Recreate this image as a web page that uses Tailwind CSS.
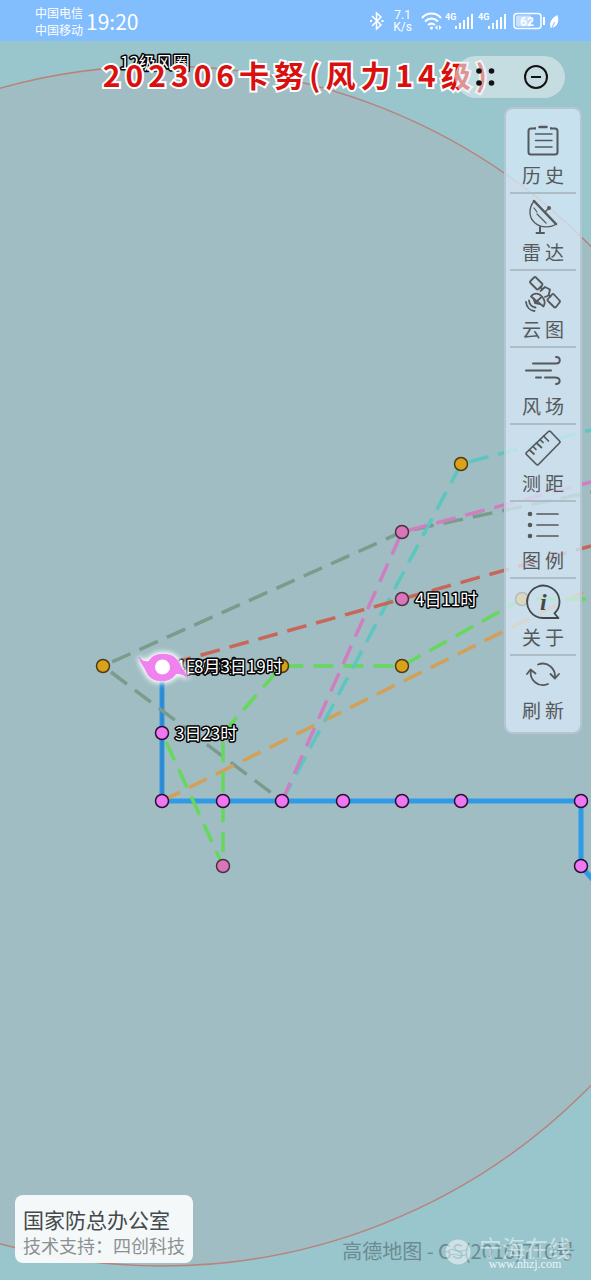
<!DOCTYPE html>
<html lang="zh-CN">
<head>
    <meta charset="UTF-8">
    <meta name="viewport" content="width=device-width, initial-scale=1.0">
    <title>台风路径</title>
    <script src="https://cdn.jsdelivr.net/npm/@tailwindcss/browser@4"></script>
</head>
<body class="relative min-h-screen flex flex-col overflow-hidden bg-[#99c5cd] font-['Noto_Sans_CJK_SC',sans-serif]">

    <!-- Map -->
    <svg class="absolute inset-0 w-full h-full" fill="none">
        <circle cx="162" cy="666" r="600" fill="#9fbdc3" stroke="#b9827c" stroke-width="1.500"/>

        <!-- Actual track -->
        <path d="M162 666V801H581V866L593 880" stroke="#2f9be6" stroke-width="5"/>
        <path d="M162 666V801" stroke="#2f88cf" stroke-width="3"/>

        <!-- Forecast tracks -->
        <g stroke-width="3.500" stroke-dasharray="20 10">
            <path d="M103 666L282 801" stroke="#7a9c8c" stroke-dashoffset="20"/>
            <path d="M103 666L402 532L591 492" stroke="#7a9c8c" stroke-dashoffset="20"/>
            <path d="M162 801L591 588" stroke="#d3a058"/>
            <path d="M162 733L223 866V733L282 666H402L522 599H591" stroke="#66d85c" stroke-dashoffset="20"/>
            <path d="M282 801L461 464L591 430" stroke="#5cc6c0"/>
            <path d="M282 801L402 532L591 482" stroke="#cf7fc0"/>
            <path d="M162 666L402 599L591 546" stroke="#c9665a" stroke-dashoffset="20"/>
        </g>

        <!-- Track points -->
        <g stroke="#2b1030" stroke-width="1.5" fill="#ee78f2">
            <circle cx="162" cy="733" r="6.5"/>
            <circle cx="162" cy="801" r="6.5"/>
            <circle cx="223" cy="801" r="6.5"/>
            <circle cx="282" cy="801" r="6.5"/>
            <circle cx="343" cy="801" r="6.5"/>
            <circle cx="402" cy="801" r="6.5"/>
            <circle cx="461" cy="801" r="6.5"/>
            <circle cx="581" cy="801" r="6.5"/>
            <circle cx="581" cy="866" r="6.5"/>
        </g>
        <g stroke="#4a3340" stroke-width="1.5" fill="#d975b8">
            <circle cx="223" cy="866" r="6.5"/>
            <circle cx="402" cy="532" r="6.5"/>
            <circle cx="402" cy="599" r="6.5"/>
        </g>
        <g stroke="#4d3c16" stroke-width="1.5" fill="#dca11a">
            <circle cx="103" cy="666" r="6.5"/>
            <circle cx="282" cy="666" r="6.5"/>
            <circle cx="402" cy="666" r="6.5"/>
            <circle cx="461" cy="464" r="6.5"/>
            <circle cx="522" cy="599" r="6.5"/>
        </g>

        <g class="text-[17px] [paint-order:stroke]" fill="#fff" stroke="#000" stroke-width="3" stroke-linejoin="round">
            <text x="120" y="69">12级风圈</text>
            <text x="175" y="673">4日05时</text>
            <text x="175" y="740">3日23时</text>
            <text x="415" y="606">4日11时</text>
        </g>

        <!-- Typhoon centre -->
        <g class="[filter:drop-shadow(0_0_3px_#fff)_drop-shadow(0_0_2px_#fff)]">
            <path d="M139 657C141 661 145 662.500 149 661.500C151 657 156 654.300 163 654.300C173 654.300 177 659 179 663C181 668 184 671 188 678C184 674.500 180 673 176 673.500C173 678.500 168 680.700 161.700 680.700C153 680.700 149 677 147 672.500C144.500 667 142 665 139 657Z" fill="#ef82ee" stroke="#ef82ee" stroke-linejoin="round"/>
            <circle cx="162.500" cy="667" r="7.500" fill="#fff"/>
        </g>
        <text x="194" y="673" class="text-[17px] [paint-order:stroke]" fill="#fff" stroke="#000" stroke-width="3" stroke-linejoin="round">8月3日19时</text>
    </svg>

    <!-- Status bar -->
    <header class="relative h-[41px] pl-[35px] pr-8 flex items-center justify-between bg-[#82bdfe] text-white">
        <div class="flex items-center gap-[3px]">
            <div class="text-[12px] leading-[17px]">
                <p>中国电信</p>
                <p>中国移动</p>
            </div>
            <time class="text-[21px] leading-6">19:20</time>
        </div>
        <div class="flex items-center">
            <svg class="w-4 h-5" viewBox="0 0 16 20" fill="none" stroke="#fff" stroke-width="1.5">
                <path d="M3 5L12 14L7.500 18V2L12 6L3 15"/>
                <path d="M1 10H3M12.500 10H14.500" stroke-width="2"/>
            </svg>
            <div class="mx-2 text-[12px] leading-[12px] text-center font-[Roboto,sans-serif]">
                <p>7.1</p>
                <p>K/s</p>
            </div>
            <svg class="w-6 h-5" viewBox="0 0 24 20" fill="none" stroke="#fff" stroke-width="2">
                <path d="M2 7C7 1 16 1 21 7M5 10.500C9 6.500 14 6.500 18 10.500M8 14C10.500 12 12.500 12 15 14"/>
                <circle cx="11.500" cy="17" r="1.500" fill="#fff" stroke="none"/>
                <path d="M17.500 14L15 16.500L17.500 19ZM19 14L21.500 16.500L19 19Z" fill="#fff" stroke="none"/>
            </svg>
            <svg class="w-[33px] h-5" viewBox="0 0 33 20" fill="#fff">
                <text x="1" y="9" class="text-[9px] font-bold font-[Roboto,sans-serif]">4G</text>
                <path d="M11 15h2v3h-2zM15 12h2v6h-2zM19 9h2v9h-2zM23 6h2v12h-2zM27 3h2v15h-2z"/>
            </svg>
            <svg class="mr-[3px] w-[33px] h-5" viewBox="0 0 33 20" fill="#fff">
                <text x="1" y="9" class="text-[9px] font-bold font-[Roboto,sans-serif]">4G</text>
                <path d="M11 15h2v3h-2zM15 12h2v6h-2zM19 9h2v9h-2zM23 6h2v12h-2zM27 3h2v15h-2z"/>
            </svg>
            <svg class="w-[46px] h-5" viewBox="0 0 46 20" fill="none">
                <rect x="1" y="2.500" width="27" height="15" rx="3" stroke="#fff" stroke-width="1.500"/>
                <rect x="3" y="4.500" width="15" height="11" rx="1" fill="#fff" fill-opacity=".55"/>
                <text x="7" y="14.500" class="text-[12px] font-bold font-[Roboto,sans-serif]" fill="#fff">62</text>
                <path d="M31 6V14" stroke="#fff" stroke-width="2"/>
                <path d="M44.500 4C46 9 45.500 15 40 16.500L38 17.500C35.500 12 38.500 7 44.500 4Z" fill="#fff"/>
                <path d="M38.500 18L41.500 11" stroke="#82bdfe"/>
            </svg>
        </div>
    </header>

    <main class="relative flex-1 flex flex-col">
        <div class="grid items-center pt-[15px] mb-[9px]">
            <h1 class="[grid-area:1/1] pl-1 mb-1.5 text-center text-[30px] leading-9 font-bold tracking-[5px] text-[#d9100e] [-webkit-text-stroke:4px_#fff] [paint-order:stroke]">202306卡努(风力14级)</h1>
            <div class="[grid-area:1/1] justify-self-end relative mr-[26px] w-[110px] h-[42px] rounded-full bg-[#e2edee]/60 flex items-center justify-between pl-[21px] pr-[17px]">
                <button aria-label="更多">
                    <svg class="w-5 h-6" viewBox="0 0 20 24" fill="#111">
                        <circle cx="3" cy="6" r="2.800"/>
                        <circle cx="15.500" cy="6" r="2.800"/>
                        <circle cx="3" cy="18" r="2.800"/>
                        <circle cx="15.500" cy="18" r="2.800"/>
                    </svg>
                </button>
                <button aria-label="关闭">
                    <svg class="w-6 h-6" viewBox="0 0 24 24" fill="none" stroke="#111" stroke-width="2">
                        <circle cx="12" cy="12" r="11"/>
                        <path d="M7 12H17"/>
                    </svg>
                </button>
            </div>
        </div>

        <!-- Tool panel -->
        <nav class="self-end mr-[9px] w-[78px] px-1 pt-2 pb-2 flex flex-col rounded-lg border-2 border-[#b4c6d0] bg-[#d8e9f8]/75 bg-clip-padding text-[19px] leading-7 tracking-[4px] text-[#55595c]">
            <button class="flex flex-col items-center gap-[3px] pt-[5px] pb-[3px] border-b-2 border-[#aebcc6]">
                <svg class="w-9 h-9" viewBox="0 0 36 36" fill="none" stroke="#55595c" stroke-width="2" stroke-linecap="round">
                    <path d="M10 6V6.500H6Q3.500 6.500 3.500 9V30Q3.500 32.500 6 32.500H30Q32.500 32.500 32.500 30V9Q32.500 6.500 30 6.500H26V6"/>
                    <path d="M14.500 5H21.500" stroke-width="2.500"/>
                    <path d="M10.500 12H27M10.500 18.500H27M10.500 25H27" stroke-width="1.500"/>
                </svg>
                <span class="pl-1">历史</span>
            </button>
            <button class="flex flex-col items-center gap-[3px] pt-[5px] pb-[3px] border-b-2 border-[#aebcc6]">
                <svg class="w-9 h-9" viewBox="0 0 36 36" fill="none" stroke="#55595c" stroke-width="1.500" stroke-linecap="round">
                    <path d="M9 2L31 25" stroke-width="2.500"/>
                    <path d="M9 2C3 10 4 19 10 24C16 29 26 29 31 25" stroke-width="1.300"/>
                    <path d="M9 9L12 13M12 15L21 24" stroke-width="1.200"/>
                    <path d="M20 13L24 9"/>
                    <circle cx="24" cy="9" r="2" fill="#55595c" stroke="none"/>
                    <path d="M15 28V33M11.500 34H19" stroke-width="2"/>
                </svg>
                <span class="pl-1">雷达</span>
            </button>
            <button class="flex flex-col items-center gap-[3px] pt-[5px] pb-[3px] border-b-2 border-[#aebcc6]">
                <svg class="w-9 h-9" viewBox="0 0 36 36" fill="none" stroke="#55595c" stroke-width="1.800" stroke-linecap="round" stroke-linejoin="round">
                    <path d="M9 1.500Q10 .5 11 1.500L17 7.500Q18 8.500 17 9.500L13.500 13Q12.500 14 11.500 13L5.500 7Q4.500 6 5.500 5Z"/>
                    <path d="M27 18.500Q28 17.500 29 18.500L34.500 24.500Q35.500 25.500 34.500 26.500L31 31Q30 32 29 31L23 25Q22 24 23 23Z"/>
                    <path d="M15.500 15L20 11L25 13.500L23.500 19.500L20 21M15.500 11.500L17.500 13M24 19L25.500 20.500"/>
                    <path d="M6 20.500C9 16.500 14 17 17 20.500C20 24 20.500 27 18.500 30.500L6 20.500Z"/>
                    <path d="M10 27L16 21.500M8.500 22.500L10 27L15 28"/>
                    <path d="M1 26C1.500 31 5 34.500 9.500 35M4 24.500C4.500 28.500 7 31 10.500 31.500"/>
                </svg>
                <span class="pl-1">云图</span>
            </button>
            <button class="flex flex-col items-center gap-[3px] pt-[5px] pb-[3px] border-b-2 border-[#aebcc6]">
                <svg class="w-9 h-9" viewBox="0 0 36 36" fill="none" stroke="#55595c" stroke-width="2" stroke-linecap="round">
                    <path d="M8 10.500H31C36 10.500 36 4 31 4"/>
                    <path d="M1 17.500H26"/>
                    <path d="M11 24.500H16M20 24.500H30C36 24.500 36 31 31 31"/>
                </svg>
                <span class="pl-1">风场</span>
            </button>
            <button class="flex flex-col items-center gap-[3px] pt-[5px] pb-[3px] border-b-2 border-[#aebcc6]">
                <svg class="w-9 h-9" viewBox="0 0 36 36" fill="none" stroke="#55595c" stroke-width="1.700" stroke-linecap="round" stroke-linejoin="round">
                    <path d="M23.500 1.500Q24.500 .5 25.500 1.500L34.500 11Q35.500 12 34.500 13L13.500 34.500Q12.500 35.500 11.500 34.500L1.500 24.500Q.5 23.500 1.500 22.500Z"/>
                    <path d="M4.500 20L9 24M8 16.500L11 19.500M11.500 13L16.500 17.500M15 9.500L18 12.500M18.500 6L23.500 11"/>
                </svg>
                <span class="pl-1">测距</span>
            </button>
            <button class="flex flex-col items-center gap-[3px] pt-[5px] pb-[3px] border-b-2 border-[#aebcc6]">
                <svg class="w-9 h-9" viewBox="0 0 36 36" fill="none" stroke="#55595c" stroke-width="1.700" stroke-linecap="round">
                    <path d="M12 7H33M12 18H33M12 29H33"/>
                    <g fill="#55595c" stroke="none">
                        <circle cx="5" cy="7" r="2.300"/>
                        <circle cx="5" cy="18" r="2.300"/>
                        <circle cx="5" cy="29" r="2.300"/>
                    </g>
                </svg>
                <span class="pl-1">图例</span>
            </button>
            <button class="flex flex-col items-center gap-[3px] pt-[5px] pb-[3px] border-b-2 border-[#aebcc6]">
                <svg class="w-9 h-9" viewBox="0 0 36 36" fill="none" stroke="#44484b" stroke-width="1.800" stroke-linecap="round" stroke-linejoin="round">
                    <path d="M29.500 29.500A16.200 16.200 0 1 0 18 34H33.500L29.500 29.500"/>
                    <text x="15" y="26" class="text-[24px] font-bold italic font-['Liberation_Serif',serif]" fill="#44484b" stroke="none">i</text>
                </svg>
                <span class="pl-1">关于</span>
            </button>
            <button class="flex flex-col items-center gap-[3px] pt-[1px]">
                <svg class="w-9 h-9" viewBox="0 0 36 36" fill="none" stroke="#55595c" stroke-width="1.800" stroke-linecap="round" stroke-linejoin="round">
                    <path d="M13 7.500C22 4 31 11 30 21M25.500 17L30 21.500L34 17"/>
                    <path d="M23 27C13 31 4 23 6 13M2 17L5.500 12.500L10.500 16.500"/>
                </svg>
                <span class="pl-1">刷新</span>
            </button>
        </nav>

        <footer class="mt-auto flex items-end justify-between pl-[15px] pr-4 pb-[17px]">
            <div class="rounded-lg bg-white/90 px-2 py-2">
                <p class="text-[21px] leading-8 text-[#44494c]">国家防总办公室</p>
                <p class="text-[18px] leading-5 text-[#8b9092]">技术支持：四创科技</p>
            </div>
            <div class="relative">
                <p class="text-[20px] leading-6 text-[#6a8b91]">高德地图 - GS(2016)710号</p>
                <div class="absolute right-1 -top-1 flex items-center gap-2 text-white/50">
                    <svg class="w-[26px] h-[26px]" viewBox="0 0 26 26" fill="none">
                        <circle cx="13" cy="13" r="12.500" fill="#fff" fill-opacity=".5"/>
                        <path d="M3 12C8 7 12 16 23 10M4 17C10 12 15 20 22 15" stroke="#99c5cd"/>
                    </svg>
                    <div class="text-center">
                        <p class="text-[23px] leading-6">宁海在线</p>
                        <p class="text-[12px] leading-[10px] font-['Liberation_Serif',serif] text-white/80">www.nhzj.com</p>
                    </div>
                </div>
            </div>
        </footer>
    </main>
</body>
</html>
